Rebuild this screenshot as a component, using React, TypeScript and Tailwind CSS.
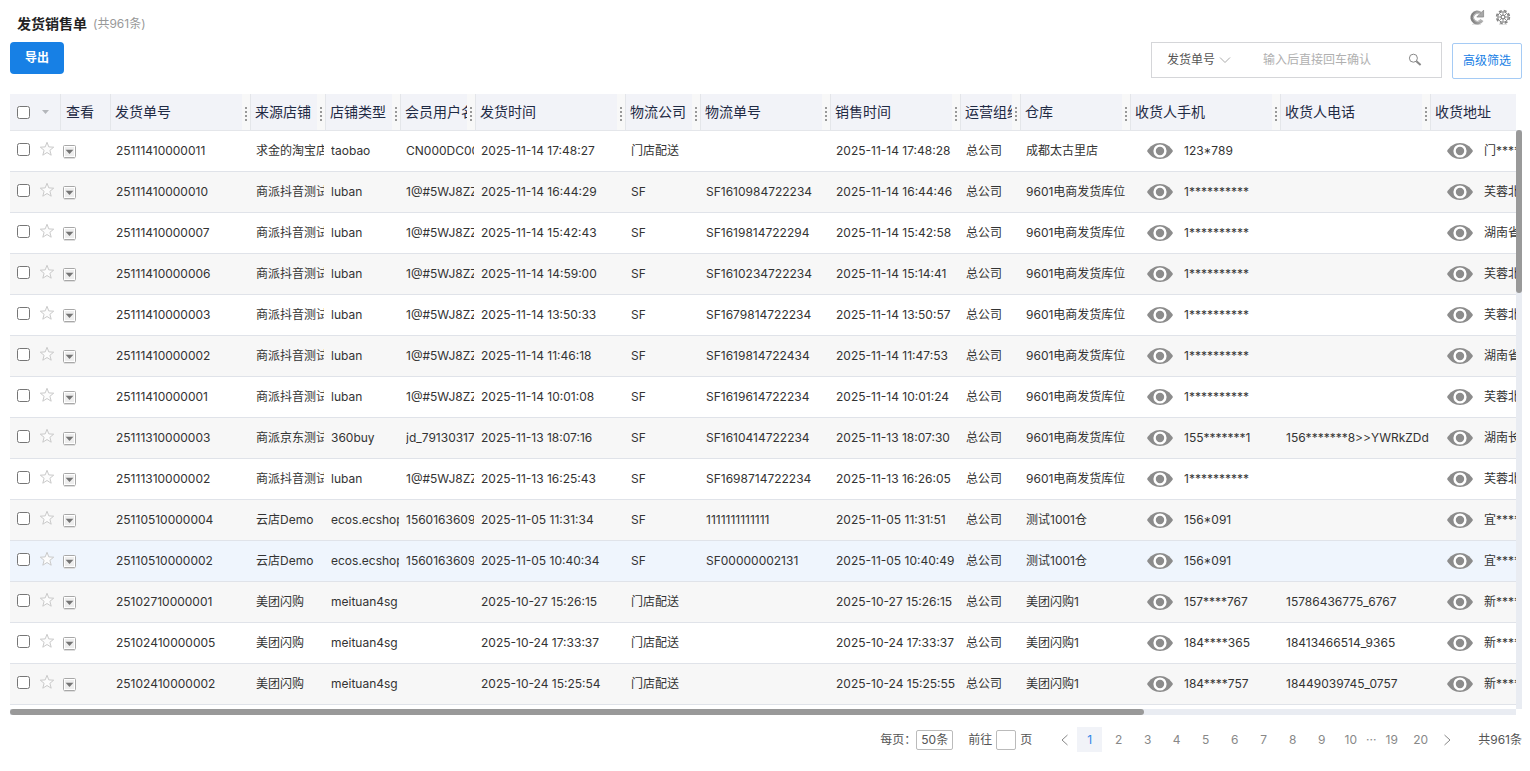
import { useState, type ReactNode } from 'react';
import clsx from 'clsx';

type Order = {
    id: string;
    shop: string;
    type: string;
    member: string;
    shippedAt: string;
    carrier: string;
    tracking: string;
    soldAt: string;
    warehouse: string;
    mobile: string;
    phone: string;
    address: string;
};

const columns = [
    { title: '发货单号', width: 'w-[140px]' },
    { title: '来源店铺', width: 'w-[75px]' },
    { title: '店铺类型', width: 'w-[75px]' },
    { title: '会员用户名', width: 'w-[75px]' },
    { title: '发货时间', width: 'w-[150px]' },
    { title: '物流公司', width: 'w-[75px]' },
    { title: '物流单号', width: 'w-[130px]' },
    { title: '销售时间', width: 'w-[130px]' },
    { title: '运营组织', width: 'w-[60px]' },
    { title: '仓库', width: 'w-[110px]' },
    { title: '收货人手机', width: 'w-[150px]' },
    { title: '收货人电话', width: 'w-[150px]' },
    { title: '收货地址', width: 'w-[200px]' },
];

const DOUYIN = '商派抖音测试';
const DOUYIN_USER = '1@#5WJ8ZZ';
const DEPOT = '9601电商发货库位';
const MASKED = '1**********';

const orders: Order[] = [
    { id: '25111410000011', shop: '求金的淘宝店', type: 'taobao', member: 'CN000DC00', shippedAt: '2025-11-14 17:48:27', carrier: '门店配送', tracking: '', soldAt: '2025-11-14 17:48:28', warehouse: '成都太古里店', mobile: '123*789', phone: '', address: '门****' },
    { id: '25111410000010', shop: DOUYIN, type: 'luban', member: DOUYIN_USER, shippedAt: '2025-11-14 16:44:29', carrier: 'SF', tracking: 'SF1610984722234', soldAt: '2025-11-14 16:44:46', warehouse: DEPOT, mobile: MASKED, phone: '', address: '芙蓉北' },
    { id: '25111410000007', shop: DOUYIN, type: 'luban', member: DOUYIN_USER, shippedAt: '2025-11-14 15:42:43', carrier: 'SF', tracking: 'SF1619814722294', soldAt: '2025-11-14 15:42:58', warehouse: DEPOT, mobile: MASKED, phone: '', address: '湖南省' },
    { id: '25111410000006', shop: DOUYIN, type: 'luban', member: DOUYIN_USER, shippedAt: '2025-11-14 14:59:00', carrier: 'SF', tracking: 'SF1610234722234', soldAt: '2025-11-14 15:14:41', warehouse: DEPOT, mobile: MASKED, phone: '', address: '芙蓉北' },
    { id: '25111410000003', shop: DOUYIN, type: 'luban', member: DOUYIN_USER, shippedAt: '2025-11-14 13:50:33', carrier: 'SF', tracking: 'SF1679814722234', soldAt: '2025-11-14 13:50:57', warehouse: DEPOT, mobile: MASKED, phone: '', address: '芙蓉北' },
    { id: '25111410000002', shop: DOUYIN, type: 'luban', member: DOUYIN_USER, shippedAt: '2025-11-14 11:46:18', carrier: 'SF', tracking: 'SF1619814722434', soldAt: '2025-11-14 11:47:53', warehouse: DEPOT, mobile: MASKED, phone: '', address: '湖南省' },
    { id: '25111410000001', shop: DOUYIN, type: 'luban', member: DOUYIN_USER, shippedAt: '2025-11-14 10:01:08', carrier: 'SF', tracking: 'SF1619614722234', soldAt: '2025-11-14 10:01:24', warehouse: DEPOT, mobile: MASKED, phone: '', address: '芙蓉北' },
    { id: '25111310000003', shop: '商派京东测试', type: '360buy', member: 'jd_79130317', shippedAt: '2025-11-13 18:07:16', carrier: 'SF', tracking: 'SF1610414722234', soldAt: '2025-11-13 18:07:30', warehouse: DEPOT, mobile: '155*******1', phone: '156*******8>>YWRkZDdm', address: '湖南长' },
    { id: '25111310000002', shop: DOUYIN, type: 'luban', member: DOUYIN_USER, shippedAt: '2025-11-13 16:25:43', carrier: 'SF', tracking: 'SF1698714722234', soldAt: '2025-11-13 16:26:05', warehouse: DEPOT, mobile: MASKED, phone: '', address: '芙蓉北' },
    { id: '25110510000004', shop: '云店Demo', type: 'ecos.ecshop', member: '1560163609', shippedAt: '2025-11-05 11:31:34', carrier: 'SF', tracking: '1111111111111', soldAt: '2025-11-05 11:31:51', warehouse: '测试1001仓', mobile: '156*091', phone: '', address: '宜****' },
    { id: '25110510000002', shop: '云店Demo', type: 'ecos.ecshop', member: '1560163609', shippedAt: '2025-11-05 10:40:34', carrier: 'SF', tracking: 'SF00000002131', soldAt: '2025-11-05 10:40:49', warehouse: '测试1001仓', mobile: '156*091', phone: '', address: '宜****' },
    { id: '25102710000001', shop: '美团闪购', type: 'meituan4sg', member: '', shippedAt: '2025-10-27 15:26:15', carrier: '门店配送', tracking: '', soldAt: '2025-10-27 15:26:15', warehouse: '美团闪购1', mobile: '157****767', phone: '15786436775_6767', address: '新****' },
    { id: '25102410000005', shop: '美团闪购', type: 'meituan4sg', member: '', shippedAt: '2025-10-24 17:33:37', carrier: '门店配送', tracking: '', soldAt: '2025-10-24 17:33:37', warehouse: '美团闪购1', mobile: '184****365', phone: '18413466514_9365', address: '新****' },
    { id: '25102410000002', shop: '美团闪购', type: 'meituan4sg', member: '', shippedAt: '2025-10-24 15:25:54', carrier: '门店配送', tracking: '', soldAt: '2025-10-24 15:25:55', warehouse: '美团闪购1', mobile: '184****757', phone: '18449039745_0757', address: '新****' },
];

function RefreshIcon() {
    return (
        <svg className="size-4" viewBox="0 0 16 16" fill="none">
            <defs>
                <linearGradient id="refresh" x1="0" y1="0" x2="1" y2="0">
                    <stop offset="0" stopColor="#808080" />
                    <stop offset="1" stopColor="#b0b0b0" />
                </linearGradient>
            </defs>
            <path d="M3 15.4H12" stroke="#e0e0e0" />
            <path d="M11.6 4.4A5.2 5.2 0 1 0 12.9 11" stroke="url(#refresh)" strokeWidth="3.6" />
            <path d="M14.6 1.2V8H7.8L10 5.8L12.4 3.4Z" fill="#a8a8a8" stroke="#8a8a8a" strokeWidth="0.8" />
            <path d="M11 5A4.2 4.2 0 1 0 11.8 11" stroke="#cfcfcf" strokeWidth="0.8" />
        </svg>
    );
}

function GearIcon() {
    return (
        <svg className="size-4" viewBox="0 0 16 16" fill="none" stroke="#858585">
            <path d="M4 15.5H12" stroke="#e0e0e0" />
            <circle cx="8" cy="8" r="6.4" strokeWidth="1.6" strokeDasharray="3 2.03" />
            <circle cx="8" cy="8" r="5.2" strokeWidth="1" />
            <circle cx="8" cy="8" r="1.9" strokeWidth="1.2" />
            <path d="M8 3V6M8 10V13M3 8H6M10 8H13M4.5 4.5L6.6 6.6M9.4 9.4L11.5 11.5M11.5 4.5L9.4 6.6M6.6 9.4L4.5 11.5" strokeWidth="0.9" />
        </svg>
    );
}

function SearchIcon() {
    return (
        <svg className="size-3.5" viewBox="0 0 14 14" fill="none" stroke="#888">
            <circle cx="5.4" cy="5.2" r="4" strokeWidth="1" />
            <path d="M8.4 8.2L12.6 12" strokeWidth="2" />
        </svg>
    );
}

function Chevron({ d, className }: { d: string; className: string }) {
    return (
        <svg className={className} viewBox="0 0 12 12" fill="none" stroke="currentColor">
            <path d={d} />
        </svg>
    );
}

function StarIcon() {
    return (
        <svg className="size-4" viewBox="0 0 16 16" fill="#fcfcfc" stroke="#cacaca" strokeWidth="1">
            <path d="M8 1.3L9.8 5.9L14.7 6.2L10.9 9.3L12.2 14.2L8 11.5L3.8 14.2L5.1 9.3L1.3 6.2L6.2 5.9Z" />
        </svg>
    );
}

function ViewIcon() {
    return (
        <svg className="h-3.5 w-[13px]" viewBox="0 0 13 14">
            <path d="M1 13.5H12" stroke="#dedede" />
            <rect x="0.5" y="0.5" width="12" height="12" rx="1" fill="#fff" stroke="#a8a8a8" />
            <rect x="2" y="2" width="9" height="9" fill="#eee" />
            <path d="M2.6 4.8H10.4L6.5 9Z" fill="#757575" />
        </svg>
    );
}

function EyeIcon() {
    return (
        <svg className="h-4 w-[26px] shrink-0" viewBox="0 0 26 16">
            <path d="M0 8C3 3 7.5 0 13 0S23 3 26 8C23 13 18.5 16 13 16S3 13 0 8Z" fill="#8c8c8c" />
            <circle cx="13" cy="8" r="5.4" fill="none" stroke="#fff" strokeWidth="2.4" />
        </svg>
    );
}

function Cell({ children }: { children?: ReactNode }) {
    return (
        <td className="p-0 pr-px pl-1.5">
            <div className="overflow-hidden">{children}</div>
        </td>
    );
}

function Secret({ text }: { text: string }) {
    return (
        <td className="overflow-hidden p-0 pl-[17px]">
            <div className="flex items-center gap-[11px]">
                <button type="button" aria-label="查看明文">
                    <EyeIcon />
                </button>
                {text}
            </div>
        </td>
    );
}

function OrderTable() {
    const [selected, setSelected] = useState<string[]>([]);

    const toggle = (id: string) => {
        setSelected(selected.includes(id) ? selected.filter(s => s !== id) : [...selected, id]);
    };

    const toggleAll = () => {
        setSelected(selected.length === orders.length ? [] : orders.map(o => o.id));
    };

    return (
        <table className="w-[1620px] table-fixed border-collapse whitespace-nowrap text-left text-xs text-[#333]">
            <thead>
                <tr className="h-9 border-b border-[#e4e6ea] bg-[#f2f3f8] text-sm text-[#1f2a44]">
                    <th className="w-[50px] p-0 font-normal">
                        <div className="flex items-center gap-3 pl-[7px]">
                            <input type="checkbox" aria-label="全选" className="size-[13px]" checked={selected.length === orders.length} onChange={toggleAll} />
                            <button type="button" aria-label="选择范围">
                                <svg className="h-1 w-[7px]" viewBox="0 0 7 4" fill="#b4b6bb"><path d="M0 0H7L3.5 4Z" /></svg>
                            </button>
                        </div>
                    </th>
                    <th className="w-[50px] p-0 font-normal">
                        <div className="flex h-9 items-center border-l border-[#e4e6ea] pl-[5px]">查看</div>
                    </th>
                    {columns.map(col => (
                        <th key={col.title} className={clsx('p-0 font-normal', col.width)}>
                            <div className="flex h-9 border-l border-[#e4e6ea] pl-1">
                                <span className="flex-1 overflow-hidden leading-9">{col.title}</span>
                                <span className="flex w-2 shrink-0 flex-col items-center gap-0.5 bg-[#f8f8f8] pt-[13px]">
                                    <i className="size-0.5 bg-[#999]" />
                                    <i className="size-0.5 bg-[#999]" />
                                    <i className="size-0.5 bg-[#999]" />
                                    <i className="size-0.5 bg-[#999]" />
                                </span>
                            </div>
                        </th>
                    ))}
                </tr>
            </thead>
            <tbody>
                {orders.map(order => (
                    <tr
                        key={order.id}
                        className={clsx(
                            'h-[41px] border-b border-[#e0e3e9]',
                            order.id === '25110510000002' ? 'bg-[#eff5fd]' : 'odd:bg-white even:bg-[#f7f7f7]'
                        )}
                    >
                        <td className="p-0">
                            <div className="flex items-center gap-[9px] pb-1 pl-[7px]">
                                <input type="checkbox" aria-label={order.id} className="size-[13px]" checked={selected.includes(order.id)} onChange={() => toggle(order.id)} />
                                <button type="button" aria-label="收藏"><StarIcon /></button>
                            </div>
                        </td>
                        <td className="p-0 pt-0.5 pl-[3px]">
                            <button type="button" aria-label="查看" className="block"><ViewIcon /></button>
                        </td>
                        <Cell>{order.id}</Cell>
                        <Cell>{order.shop}</Cell>
                        <Cell>{order.type}</Cell>
                        <Cell>{order.member}</Cell>
                        <Cell>{order.shippedAt}</Cell>
                        <Cell>{order.carrier}</Cell>
                        <Cell>{order.tracking}</Cell>
                        <Cell>{order.soldAt}</Cell>
                        <Cell>总公司</Cell>
                        <Cell>{order.warehouse}</Cell>
                        <Secret text={order.mobile} />
                        <Cell>{order.phone}</Cell>
                        <Secret text={order.address} />
                    </tr>
                ))}
            </tbody>
        </table>
    );
}

function Pagination() {
    const [page, setPage] = useState(1);

    const pageButton = (n: number) => (
        <button
            key={n}
            type="button"
            onClick={() => setPage(n)}
            className={clsx('h-[25px] w-[25px]', n === page ? 'bg-[#f1f3f8] text-[#2f86e8]' : 'text-[#888]')}
        >
            {n}
        </button>
    );

    return (
        <footer className="mt-3 flex h-[25px] items-center justify-end text-xs text-[#555]">
            <label htmlFor="size">每页：</label>
            <select id="size" className="h-5 w-[37px] appearance-none rounded-xs border border-[#bbb] text-center">
                <option>50条</option>
            </select>
            <label className="ml-[15px] flex items-center gap-1">
                前往
                <input type="text" aria-label="页码" className="h-5 w-5 rounded-xs border border-[#bbb]" />
                页
            </label>
            <nav className="ml-6 flex items-center gap-1 text-[#888]">
                <button type="button" aria-label="上一页" className="flex w-[17px] justify-center"><Chevron className="size-3" d="M8.5 1L3 6L8.5 11" /></button>
                {[1, 2, 3, 4, 5, 6, 7, 8, 9, 10].map(pageButton)}
                <span className="-mx-1 w-4 text-center">···</span>
                {[19, 20].map(pageButton)}
                <button type="button" aria-label="下一页" className="flex w-5 justify-center"><Chevron className="size-3" d="M3.5 1L9 6L3.5 11" /></button>
            </nav>
            <span className="ml-[21px]">共961条</span>
        </footer>
    );
}

export default function App() {
    return (
        <main className="bg-white pr-2 pl-2.5 font-[Inter,'Noto_Sans_CJK_SC',sans-serif] text-xs text-[#333]">
            <header className="flex h-[42px] justify-between pt-1.5 pr-[11px] pl-[7px]">
                <div className="flex h-9 items-center gap-1.5">
                    <h1 className="text-sm font-bold text-[#222]">发货销售单</h1>
                    <span className="text-[#999]">(共961条)</span>
                </div>
                <div className="flex gap-2.5 pt-[3px]">
                    <button type="button" aria-label="刷新" className="size-4"><RefreshIcon /></button>
                    <button type="button" aria-label="设置" className="size-4"><GearIcon /></button>
                </div>
            </header>

            <div className="flex h-[52px] items-start justify-between">
                <button type="button" className="h-8 rounded bg-[#1780e5] px-[15px] font-bold text-white">导出</button>
                <div className="flex gap-2.5">
                    <form className="flex h-9 w-[291px] items-center border border-[#d5d6d9] px-[15px]" onSubmit={e => e.preventDefault()}>
                        <select aria-label="搜索字段" className="w-[52px] appearance-none bg-transparent text-[#555]">
                            <option>发货单号</option>
                        </select>
                        <Chevron className="size-3 text-[#aaa]" d="M1 3.5L6 8.5L11 3.5" />
                        <input type="text" aria-label="搜索" placeholder="输入后直接回车确认" className="ml-8 w-0 flex-1 outline-none placeholder:text-[#b0b0b0]" />
                        <button type="submit" aria-label="搜索" className="mr-1"><SearchIcon /></button>
                    </form>
                    <button type="button" className="mt-px h-9 rounded-xs border border-[#a5cbf5] px-2.5 text-[#1780e5]">高级筛选</button>
                </div>
            </div>

            <div className="flex">
                <div className="min-w-0 flex-1">
                    <div className="overflow-hidden">
                        <OrderTable />
                    </div>
                    <div className="mt-1 h-1.5 bg-[#e9ecf2]">
                        <div className="h-full w-[75.3%] rounded-full bg-[#999]" />
                    </div>
                </div>
                <div className="mt-9 mb-1.5 w-1.5 bg-[#e9ecf2]">
                    <div className="h-[163px] rounded-full bg-[#999]" />
                </div>
            </div>

            <Pagination />
        </main>
    );
}
